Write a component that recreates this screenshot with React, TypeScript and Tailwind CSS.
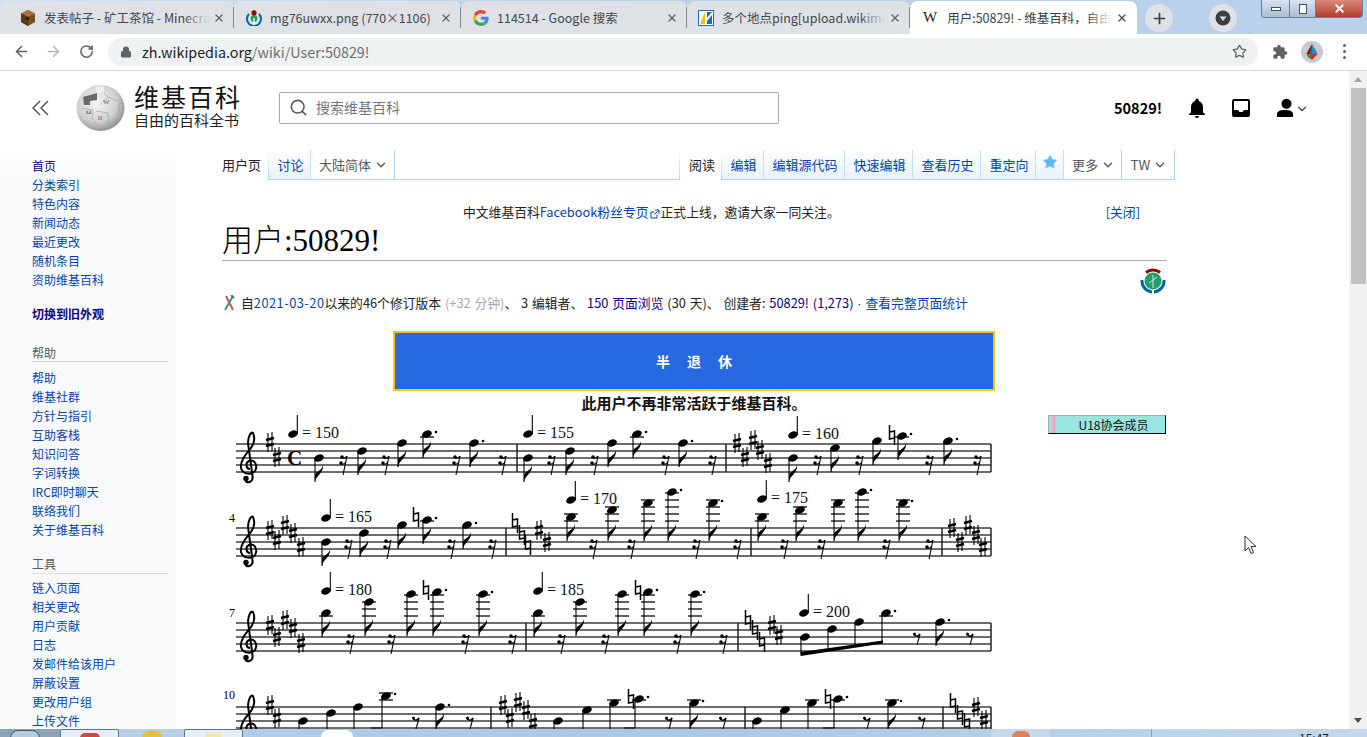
import { ArrowLeft, ArrowRight, ChevronDown, Lock, Plus, RotateCw, Search, Star, X } from "lucide-react";

type Note = { x: number; y: number; dot?: boolean; flag?: boolean; end?: number };
type Acc = [number, number];

const staffX1 = 236;
const staffX2 = 991;

const tabs = [
  { title: "发表帖子 - 矿工茶馆 - Minecraft", w: "w-[234px]", pad: "pl-[20px]", icon: "chest", fade: true },
  { title: "mg76uwxx.png (770×1106)", w: "w-[227px]", pad: "pl-[12px]", icon: "commons", fade: false },
  { title: "114514 - Google 搜索", w: "w-[226px]", pad: "pl-[12px]", icon: "google", fade: false },
  { title: "多个地点ping[upload.wikimedia.org]", w: "w-[223px]", pad: "pl-[11px]", icon: "ping", fade: true },
];

const mainLinks = ["分类索引", "特色内容", "新闻动态", "最近更改", "随机条目", "资助维基百科"];
const helpLinks = ["帮助", "维基社群", "方针与指引", "互助客栈", "知识问答", "字词转换", "IRC即时聊天", "联络我们", "关于维基百科"];
const toolLinks = ["链入页面", "相关更改", "用户贡献", "日志", "发邮件给该用户", "屏蔽设置", "更改用户组", "上传文件"];

const rightTabs = [
  { label: "编辑", w: "w-[42px]" },
  { label: "编辑源代码", w: "w-[81px]" },
  { label: "快速编辑", w: "w-[68px]" },
  { label: "查看历史", w: "w-[68px]" },
  { label: "重定向", w: "w-[55px]" },
];

function FavIcon({ kind }: { kind: string }) {
  if (kind === "chest") {
    return (
      <svg width="16" height="16" viewBox="0 0 16 16" className="shrink-0">
        <path d="M8 0 15 3.500V12L8 16 1 12V3.500Z" fill="#7a4e22" />
        <path d="M8 0 15 3.500 8 7 1 3.500Z" fill="#a8743a" />
        <path d="M8 7V16L1 12V3.500Z" fill="#5b3815" />
        <rect x="6" y="7" width="3" height="3" fill="#2b1a08" />
      </svg>
    );
  }
  if (kind === "commons") {
    return (
      <svg width="16" height="16" viewBox="0 0 16 16" className="shrink-0">
        <path d="M3 4a7 7 0 1 0 10 0" fill="none" stroke="#069" strokeWidth="2" />
        <circle cx="8" cy="8.500" r="3.400" fill="#396" />
        <path d="M8 8V15" stroke="#fff" strokeWidth="1.200" />
        <circle cx="8" cy="2.800" r="2.600" fill="#900" />
      </svg>
    );
  }
  if (kind === "google") {
    return (
      <svg width="16" height="16" viewBox="0 0 48 48" className="shrink-0">
        <path fill="#EA4335" d="M24 9.500c3.500 0 6.700 1.200 9.200 3.600l6.900-6.900C35.900 2.400 30.500 0 24 0 14.600 0 6.500 5.400 2.600 13.200l8 6.200C12.500 13.700 17.800 9.500 24 9.500z" />
        <path fill="#4285F4" d="M47 24.500c0-1.600-.1-3.100-.4-4.500H24v9h13c-.6 3-2.300 5.500-4.800 7.200l7.700 6C44.400 37.900 47 31.800 47 24.500z" />
        <path fill="#FBBC05" d="M10.500 28.600A14.500 14.500 0 0 1 10.500 19.400l-8-6.200A24 24 0 0 0 2.600 34.800z" />
        <path fill="#34A853" d="M24 48c6.500 0 11.900-2.100 15.900-5.800l-7.700-6c-2.100 1.400-4.900 2.300-8.200 2.300-6.200 0-11.500-4.200-13.400-9.900l-8 6.200C6.500 42.600 14.600 48 24 48z" />
      </svg>
    );
  }
  return (
    <svg width="16" height="16" viewBox="0 0 16 16" className="shrink-0">
      <rect x="0.500" y="0.500" width="15" height="15" fill="#fff" stroke="#1a6fb5" />
      <path d="M2 14 7 2V14Z" fill="#f4c20d" />
      <path d="M9 2H14V14H9Z" fill="#1a6fb5" />
      <path d="M9 8 14 2V5L9 11Z" fill="#fff" />
    </svg>
  );
}

function BrowserTab({ title, w, pad, icon, fade }: { title: string; w: string; pad: string; icon: string; fade: boolean }) {
  return (
    <div className={`${w} ${pad} relative flex h-full items-center rounded-t-lg bg-[#dee1e6] pr-[9px]`}>
      <FavIcon kind={icon} />
      <div className="relative ml-[8px] h-[18px] min-w-0 flex-1 overflow-hidden whitespace-nowrap text-[12.500px] leading-[18px] text-[#45484c]">
        {title}
        {fade && <div className="absolute inset-y-0 right-0 w-[26px] bg-gradient-to-l from-[#dee1e6] to-transparent" />}
      </div>
      <X size={12} strokeWidth={2.6} className="ml-[4px] shrink-0 text-[#5f6368]" />
      <div className="absolute right-0 top-[6px] h-[21px] w-px bg-[#80868b]" />
    </div>
  );
}

function TabStrip() {
  return (
    <div className="flex h-[34px] shrink-0 items-stretch bg-gradient-to-r from-[#cfe0f1] via-[#b9d1ea] to-[#b9d1ea] pt-px">
      {tabs.map((t) => (
        <BrowserTab key={t.title} title={t.title} w={t.w} pad={t.pad} icon={t.icon} fade={t.fade} />
      ))}
      <div className="flex w-[227px] items-center rounded-t-lg bg-white pl-[13px] pr-[9px]">
        <span className="font-['Liberation_Serif',serif] text-[15px] text-[#202124]">W</span>
        <div className="relative ml-[10px] h-[18px] min-w-0 flex-1 overflow-hidden whitespace-nowrap text-[12.500px] leading-[18px] text-[#3c4043]">
          用户:50829! - 维基百科，自由的百科全书
          <div className="absolute inset-y-0 right-0 w-[26px] bg-gradient-to-l from-white to-transparent" />
        </div>
        <X size={12} strokeWidth={2.6} className="ml-[4px] shrink-0 text-[#45484c]" />
      </div>
      <div className="ml-[8px] mt-[3px] flex h-[28px] w-[28px] items-center justify-center rounded-full bg-[#dee1e6]">
        <Plus size={17} strokeWidth={2.4} className="text-[#3c4043]" />
      </div>
      <div className="ml-[36px] mt-[3px] flex h-[28px] w-[28px] items-center justify-center rounded-full bg-[#dee1e6]">
        <svg width="16" height="16" viewBox="0 0 16 16">
          <circle cx="8" cy="8" r="7.500" fill="#3c4043" />
          <path d="M4.500 6.500H11.500L8 11Z" fill="#dee1e6" />
        </svg>
      </div>
      <div className="ml-auto mr-[4px] -mt-px flex h-[18px] w-[102px] overflow-hidden rounded-b-[4px] border border-t-0 border-[#6d7f94]">
        <div className="flex w-[27px] items-center justify-center bg-gradient-to-b from-[#d8e4f0] to-[#a9bdd3]">
          <div className="h-[4px] w-[10px] border border-[#44505c] bg-white" />
        </div>
        <div className="flex w-[26px] items-center justify-center border-l border-[#6d7f94] bg-gradient-to-b from-[#d8e4f0] to-[#a9bdd3]">
          <div className="h-[10px] w-[8px] border border-[#44505c] bg-white" />
        </div>
        <div className="flex flex-1 items-center justify-center border-l border-[#6d7f94] bg-gradient-to-b from-[#d98a7c] to-[#b23a2a]">
          <X size={13} strokeWidth={3.4} className="text-white" />
        </div>
      </div>
    </div>
  );
}

function Toolbar() {
  return (
    <div className="flex h-[37px] shrink-0 items-center border-b border-[#d5d6da] bg-white pb-px">
      <ArrowLeft size={17} strokeWidth={2.2} className="ml-[13px] text-[#5f6368]" />
      <ArrowRight size={17} strokeWidth={2.2} className="ml-[15px] text-[#b5b7ba]" />
      <RotateCw size={15} strokeWidth={2.4} className="ml-[17px] text-[#5f6368]" />
      <div className="ml-[14px] flex h-[28px] w-[1150px] items-center rounded-full bg-[#eff2f3] pl-[12px] pr-[10px]">
        <Lock size={12} fill="#5f6368" strokeWidth={2.2} className="text-[#5f6368]" />
        <span className="ml-[10px] text-[14.300px] text-[#202124]">zh.wikipedia.org</span>
        <span className="text-[14.300px] text-[#6b6f73]">/wiki/User:50829!</span>
        <Star size={15} strokeWidth={2} className="ml-auto mr-px text-[#5f6368]" />
      </div>
      <svg width="16" height="16" viewBox="0 0 24 24" className="ml-[14px]" fill="#5f6368">
        <path d="M20.500 11H19V7a2 2 0 0 0-2-2h-4V3.500a2.500 2.500 0 0 0-5 0V5H4a2 2 0 0 0-2 2v3.800h1.500a2.700 2.700 0 0 1 0 5.400H2V20a2 2 0 0 0 2 2h3.800v-1.500a2.700 2.700 0 0 1 5.400 0V22H17a2 2 0 0 0 2-2v-4h1.500a2.500 2.500 0 0 0 0-5z" />
      </svg>
      <svg width="22" height="22" viewBox="0 0 22 22" className="ml-[13px]">
        <circle cx="11" cy="11" r="11" fill="#c9cacc" />
        <path d="M11 3 16.500 13 11 19 5.500 13Z" fill="#d7262b" />
        <path d="M11 3 16.500 13H11Z" fill="#1b8fd6" />
        <path d="M5.500 13H11L8 18Z" fill="#2d9a4b" />
        <path d="M11 3 8 13H5.500Z" fill="#2b2b4a" />
      </svg>
      <div className="ml-[20px] flex flex-col gap-[3px]">
        <div className="h-[3px] w-[3px] rounded-full bg-[#5f6368]" />
        <div className="h-[3px] w-[3px] rounded-full bg-[#5f6368]" />
        <div className="h-[3px] w-[3px] rounded-full bg-[#5f6368]" />
      </div>
    </div>
  );
}

function WikiGlobe() {
  return (
    <svg width="49" height="46" viewBox="0 0 49 46" className="shrink-0">
      <defs>
        <radialGradient id="globe" cx="42%" cy="38%" r="65%">
          <stop offset="0%" stopColor="#f7f7f7" />
          <stop offset="65%" stopColor="#cfcfcf" />
          <stop offset="100%" stopColor="#8e8e8e" />
        </radialGradient>
      </defs>
      <ellipse cx="24.500" cy="23" rx="24" ry="23" fill="url(#globe)" />
      <path d="M7 12 21 8 21 15 14 16 14 20 8 20Z" fill="#6a6a6a" />
      <path d="M19 2 28 1 28 8 21 8Z" fill="#efefef" />
      <path d="M6 23 17 25 16 35M20 26 32 28 33 40M32 12 44 17 42 30M17 36 27 43M28 8 32 12 24 20" fill="none" stroke="#a5a5a5" strokeWidth="0.700" />
      <text x="10" y="29" fontSize="7" fill="#444" fontFamily="Liberation Serif, serif">Ω</text>
      <text x="27" y="19" fontSize="7" fill="#555" fontFamily="Liberation Serif, serif">W</text>
      <text x="22" y="35" fontSize="6" fill="#666" fontFamily="Liberation Serif, serif">И</text>
    </svg>
  );
}

function WikiHeader() {
  return (
    <div className="flex h-[79px] shrink-0 items-center pb-[6px]">
      <svg width="18" height="16" viewBox="0 0 18 16" className="ml-[31px]" fill="none" stroke="#54595d" strokeWidth="1.500">
        <path d="M9 1 2 8 9 15M17 1 10 8 17 15" />
      </svg>
      <div className="ml-[27px]">
        <WikiGlobe />
      </div>
      <div className="-mt-[6px] ml-[9px] flex w-[106px] flex-col">
        <span className="whitespace-nowrap text-[25px] leading-[30px] tracking-[2px] text-[#111]">维基百科</span>
        <span className="whitespace-nowrap text-[15px] leading-[18px] text-[#222]">自由的百科全书</span>
      </div>
      <div className="ml-[39px] flex h-[32px] w-[500px] items-center rounded-[2px] border border-[#a2a9b1] bg-white pl-[9px]">
        <Search size={19} strokeWidth={2} className="text-[#54595d]" />
        <span className="ml-[8px] text-[14px] text-[#72777d]">搜索维基百科</span>
      </div>
      <span className="ml-[335px] text-[14.500px] font-bold text-black">50829!</span>
      <svg width="20" height="20" viewBox="0 0 20 20" className="ml-[25px]">
        <path d="M16 14.500V9c0-3-1.600-5.300-4.300-6V2.200a1.700 1.700 0 0 0-3.400 0V3C5.600 3.700 4 6 4 9v5.500L2 16v1h16v-1zM10 20a2 2 0 0 0 2-2H8a2 2 0 0 0 2 2z" fill="#000" />
      </svg>
      <svg width="20" height="20" viewBox="0 0 20 20" className="ml-[24px]">
        <path d="M3 1h14a2 2 0 0 1 2 2v14a2 2 0 0 1-2 2H3a2 2 0 0 1-2-2V3a2 2 0 0 1 2-2zm0 11v-9h14v9h-4l-1.500 2h-3L7 12z" fill="#000" fillRule="evenodd" />
      </svg>
      <svg width="20" height="20" viewBox="0 0 20 20" className="ml-[24px]">
        <path d="M10 10.500a5 5 0 1 0 0-9.500 5 5 0 0 0 0 9.500zM2 19v-3c0-2.500 3-4 8-4s8 1.500 8 4v3z" fill="#000" />
      </svg>
      <ChevronDown size={14} strokeWidth={2} className="mt-[2px] text-[#444]" />
    </div>
  );
}

function Sidebar() {
  return (
    <div className="flex w-[176px] shrink-0 flex-col bg-gradient-to-b from-white from-0% to-[#f8f9fa] to-[6%] pl-[32px] pr-[8px] pt-[6px] text-[12px] leading-[19px] text-[#0645ad]">
      <a className="h-[19px] text-[#0b0080]">首页</a>
      {mainLinks.map((l) => (
        <a key={l} className="h-[19px]">{l}</a>
      ))}
      <a className="mt-[15px] h-[19px] font-bold text-[#0b0080]">切换到旧外观</a>
      <div className="mt-[20px] h-[19px] border-b border-[#dcdddf] text-[#54595d]">帮助</div>
      <div className="mt-[6px] flex flex-col">
        {helpLinks.map((l) => (
          <a key={l} className="h-[19px]">{l}</a>
        ))}
      </div>
      <div className="mt-[15px] h-[20px] border-b border-[#dcdddf] text-[#54595d]">工具</div>
      <div className="mt-[4px] flex flex-col">
        {toolLinks.map((l) => (
          <a key={l} className="h-[19px]">{l}</a>
        ))}
      </div>
    </div>
  );
}

function TabLink({ w, children, link }: { w: string; children: React.ReactNode; link?: boolean }) {
  return (
    <div
      className={`${w} flex h-full items-center justify-center border-b border-r border-b-[#a7d7f9] border-r-[#bfe0f7] bg-gradient-to-b from-white to-[#e8f2f8] pl-[2px] text-[13px] ${
        link ? "text-[#0645ad]" : "text-[#54595d]"
      }`}
    >
      {children}
    </div>
  );
}

function PageTabs() {
  return (
    <div className="flex h-[30px] w-[953px] shrink-0">
      <div className="flex w-[46px] items-center text-[13px] text-[#222]">用户页</div>
      <div className="w-px border-b border-[#a7d7f9] bg-gradient-to-b from-white to-[#a7d7f9]" />
      <TabLink w="w-[42px]" link>讨论</TabLink>
      <div className="flex w-[84px] items-center justify-center gap-[3px] border-b border-r border-[#a7d7f9] bg-white pl-[2px] text-[13px] text-[#54595d]">
        大陆简体
        <ChevronDown size={14} strokeWidth={2.4} />
      </div>
      <div className="flex-1 border-b border-[#a7d7f9]" />
      <div className="w-px border-b border-[#a7d7f9] bg-gradient-to-b from-white to-[#a7d7f9]" />
      <div className="flex w-[41px] items-center justify-center bg-white pl-[3px] text-[13px] text-[#222]">阅读</div>
      <div className="w-px border-b border-[#a7d7f9] bg-gradient-to-b from-white to-[#a7d7f9]" />
      {rightTabs.map((t) => (
        <TabLink key={t.label} w={t.w} link>{t.label}</TabLink>
      ))}
      <TabLink w="w-[28px]">
        <Star size={16} fill="#5cb8f5" strokeWidth={1} className="-ml-[2px] -mt-[5px] text-[#8fcff7]" />
      </TabLink>
      <div className="flex w-[58px] items-center justify-center gap-[3px] border-b border-r border-[#a7d7f9] bg-white pl-[2px] text-[13px] text-[#54595d]">
        更多
        <ChevronDown size={14} strokeWidth={2.4} />
      </div>
      <div className="flex w-[53px] items-center justify-center gap-[3px] border-b border-r border-[#a7d7f9] bg-white pl-[2px] text-[13.500px] text-[#54595d]">
        TW
        <ChevronDown size={14} strokeWidth={2.4} />
      </div>
    </div>
  );
}

function Sharp({ a }: { a: Acc }) {
  const [x, y] = a;
  return (
    <g>
      <path d={`M${x - 2} ${y - 9}V${y + 10}M${x + 2} ${y - 10}V${y + 9}`} stroke="#000" strokeWidth="1.100" fill="none" />
      <path d={`M${x - 4} ${y - 2}L${x + 4} ${y - 4}M${x - 4} ${y + 4}L${x + 4} ${y + 2}`} stroke="#000" strokeWidth="2.400" fill="none" />
    </g>
  );
}

function Natural({ a }: { a: Acc }) {
  const [x, y] = a;
  return (
    <path
      d={`M${x - 2.500} ${y - 10}V${y + 4}L${x + 2.500} ${y + 3}M${x + 2.500} ${y + 10}V${y - 4}L${x - 2.500} ${y - 3}`}
      stroke="#000"
      strokeWidth="1.500"
      fill="none"
    />
  );
}

function Rest({ x, top, single }: { x: number; top: number; single?: boolean }) {
  if (single) {
    return (
      <g>
        <path d={`M${x + 3} ${top + 11}L${x} ${top + 22}`} stroke="#000" strokeWidth="1.100" />
        <path d={`M${x - 3} ${top + 11}C${x - 2} ${top + 14} ${x + 1} ${top + 14} ${x + 3} ${top + 11}`} stroke="#000" strokeWidth="1.400" fill="none" />
        <circle cx={x - 2.500} cy={top + 11} r="1.500" />
      </g>
    );
  }
  return (
    <g>
      <path d={`M${x + 3} ${top + 12}L${x - 1} ${top + 31}`} stroke="#000" strokeWidth="1.100" />
      <circle cx={x - 2} cy={top + 13} r="1.800" />
      <circle cx={x - 3} cy={top + 19} r="1.800" />
      <path d={`M${x - 2} ${top + 14}Q${x + 1} ${top + 15} ${x + 3} ${top + 12}M${x - 3} ${top + 20}Q${x} ${top + 21} ${x + 2} ${top + 18}`} stroke="#000" strokeWidth="1.200" fill="none" />
    </g>
  );
}

function NoteHead({ n, top }: { n: Note; top: number }) {
  const sx = n.x - 4;
  const end = n.end ?? Math.max(n.y + 24, top + 13);
  const ledgers: number[] = [];
  for (let l = top - 7; l >= n.y - 3; l -= 7) ledgers.push(l);
  return (
    <g>
      {ledgers.map((l) => (
        <line key={l} x1={n.x - 7} x2={n.x + 7} y1={l} y2={l} stroke="#444" strokeWidth="1.700" />
      ))}
      <ellipse cx={n.x} cy={n.y} rx="5" ry="3.500" transform={`rotate(-20 ${n.x} ${n.y})`} />
      <line x1={sx} x2={sx} y1={n.y} y2={end} stroke="#000" strokeWidth="1.100" />
      {n.flag !== false && (
        <path
          d={`M${sx} ${end}C${sx + 1} ${end - 7} ${sx + 9} ${end - 9} ${sx + 8} ${end - 17}C${sx + 7} ${end - 11} ${sx + 1} ${end - 11} ${sx} ${end - 7}Z`}
        />
      )}
      {n.dot && <circle cx={n.x + 9} cy={n.y - 2} r="1.300" />}
    </g>
  );
}

function Clef({ top, x = 249 }: { top: number; x?: number }) {
  const g = top + 21;
  return (
    <g transform={`translate(${x} ${g})`}>
      <path
        d="M1 4C-3 4-4-2 0-4C6-6 9 1 6 6C3 10-6 10-8 3C-9-4-3-11 2-17C5-21 6-27 4-32C2-34-1-28-1-22L3.500 11C4.500 17-2 19-4 15"
        fill="none"
        stroke="#000"
        strokeWidth="2"
      />
      <circle cx="-3" cy="13.500" r="2.700" />
    </g>
  );
}

function Tempo({ x, y, bpm }: { x: number; y: number; bpm: number }) {
  return (
    <g>
      <ellipse cx={x} cy={y} rx="5" ry="3.500" transform={`rotate(-20 ${x} ${y})`} />
      <line x1={x + 4.300} x2={x + 4.300} y1={y - 19} y2={y} stroke="#000" strokeWidth="1.100" />
      <text x={x + 9} y={y + 4} fontSize="16" fontFamily="Liberation Serif, serif" fill="#111">
        = {bpm}
      </text>
    </g>
  );
}

function Staff({ top, bars }: { top: number; bars: number[] }) {
  return (
    <g>
      {[0, 7, 14, 21, 28].map((d) => (
        <line key={d} x1={staffX1} x2={staffX2} y1={top + d} y2={top + d} stroke="#6e6e6e" strokeWidth="1.800" />
      ))}
      {bars.map((b) => (
        <line key={b} x1={b} x2={b} y1={top} y2={top + 28} stroke="#222" strokeWidth="1.500" />
      ))}
      <Clef top={top} />
    </g>
  );
}

function Score() {
  const s1: Note[] = [
    { x: 319, y: 458 }, { x: 362, y: 451 }, { x: 402, y: 443 }, { x: 427, y: 434, dot: true }, { x: 474, y: 443, dot: true },
    { x: 528, y: 458 }, { x: 570, y: 451 }, { x: 612, y: 443 }, { x: 637, y: 434, dot: true }, { x: 683, y: 443, dot: true },
    { x: 793, y: 458 }, { x: 835, y: 448 }, { x: 877, y: 441 }, { x: 902, y: 436, dot: true }, { x: 948, y: 441, dot: true },
  ];
  const s2: Note[] = [
    { x: 326, y: 542 }, { x: 364, y: 533 }, { x: 402, y: 525 }, { x: 427, y: 520, dot: true }, { x: 467, y: 525, dot: true },
    { x: 571, y: 517 }, { x: 612, y: 510 }, { x: 648, y: 503 }, { x: 672, y: 492, dot: true }, { x: 713, y: 503, dot: true },
    { x: 762, y: 517 }, { x: 800, y: 510 }, { x: 838, y: 503 }, { x: 862, y: 492, dot: true }, { x: 903, y: 503, dot: true },
  ];
  const s3: Note[] = [
    { x: 326, y: 613 }, { x: 369, y: 602 }, { x: 411, y: 594 }, { x: 437, y: 592, dot: true }, { x: 483, y: 594, dot: true },
    { x: 538, y: 613 }, { x: 580, y: 602 }, { x: 622, y: 594 }, { x: 648, y: 592, dot: true }, { x: 695, y: 594, dot: true },
    { x: 940, y: 622, dot: true },
  ];
  const s3Beam: Note[] = [
    { x: 805, y: 637, flag: false, end: 654 },
    { x: 832, y: 629, flag: false, end: 650 },
    { x: 859, y: 622, flag: false, end: 647 },
    { x: 886, y: 613, flag: false, dot: true, end: 643 },
  ];
  const s4: Note[] = [
    { x: 303, y: 721, flag: false, end: 729 }, { x: 331, y: 713, flag: false, end: 729 }, { x: 358, y: 707, flag: false, end: 729 }, { x: 386, y: 696, flag: false, dot: true, end: 728 },
    { x: 440, y: 707, dot: true, end: 730 },
    { x: 558, y: 721, flag: false, end: 729 }, { x: 587, y: 710, flag: false, end: 729 }, { x: 614, y: 703, flag: false, end: 729 }, { x: 639, y: 699, flag: false, dot: true, end: 728 },
    { x: 694, y: 703, dot: true, end: 730 },
    { x: 757, y: 721, flag: false, end: 729 }, { x: 785, y: 710, flag: false, end: 729 }, { x: 812, y: 703, flag: false, end: 729 }, { x: 838, y: 699, flag: false, dot: true, end: 728 },
    { x: 892, y: 703, dot: true, end: 730 },
  ];
  const rests: Array<[number, number]> = [
    [344, 444], [386, 444], [457, 444], [503, 444], [552, 444], [595, 444], [666, 444], [713, 444], [818, 444], [860, 444], [930, 444], [978, 444],
    [349, 528], [388, 528], [452, 528], [493, 528], [594, 528], [632, 528], [697, 528], [738, 528], [785, 528], [822, 528], [887, 528], [930, 528],
    [351, 623], [392, 623], [466, 623], [513, 623], [562, 623], [606, 623], [678, 623], [724, 623],
  ];
  const singleRests: Array<[number, number]> = [
    [917, 623], [970, 623], [416, 707], [470, 707], [669, 707], [723, 707], [867, 707], [922, 707],
  ];
  const sharps: Acc[] = [
    [270, 442], [277, 457], [737, 443], [745, 457], [753, 440], [760, 450], [768, 463],
    [270, 530], [277, 540], [285, 525], [293, 533], [301, 547], [539, 530], [547, 542], [952, 528], [960, 542], [968, 525], [976, 535], [983, 547],
    [270, 625], [277, 637], [285, 620], [293, 628], [301, 643], [772, 625], [779, 635],
    [270, 705], [277, 718], [503, 705], [510, 718], [518, 702], [526, 710], [533, 723], [976, 707], [984, 720],
  ];
  const naturals: Acc[] = [
    [892, 435], [416, 517], [515, 523], [522, 535], [528, 545], [426, 590], [638, 590], [748, 620], [755, 630], [762, 642],
    [631, 699], [828, 699], [953, 703], [960, 715], [967, 723],
  ];
  return (
    <svg width="780" height="320" viewBox="222 414 780 320" className="shrink-0">
      <Staff top={444} bars={[517, 726, 991]} />
      <Staff top={528} bars={[506, 751, 942, 991]} />
      <Staff top={623} bars={[526, 738, 991]} />
      <Staff top={707} bars={[491, 745, 943, 991]} />
      <text x="287" y="465" fontSize="21" fontWeight="bold" fontFamily="Liberation Serif, serif">C</text>
      <text x="229" y="522" fontSize="12" fontFamily="Liberation Serif, serif">4</text>
      <text x="229" y="617" fontSize="12" fontFamily="Liberation Serif, serif">7</text>
      <text x="223" y="699" fontSize="12" fontFamily="Liberation Serif, serif">10</text>
      <Tempo x={293} y={434} bpm={150} />
      <Tempo x={528} y={434} bpm={155} />
      <Tempo x={793} y={435} bpm={160} />
      <Tempo x={326} y={518} bpm={165} />
      <Tempo x={571} y={500} bpm={170} />
      <Tempo x={762} y={499} bpm={175} />
      <Tempo x={326} y={591} bpm={180} />
      <Tempo x={538} y={591} bpm={185} />
      <Tempo x={804} y={613} bpm={200} />
      {s1.map((n) => <NoteHead key={n.x} n={n} top={444} />)}
      {s2.map((n) => <NoteHead key={n.x} n={n} top={528} />)}
      {s3.map((n) => <NoteHead key={n.x} n={n} top={623} />)}
      {s3Beam.map((n) => <NoteHead key={n.x} n={n} top={623} />)}
      {s4.map((n) => <NoteHead key={n.x} n={n} top={707} />)}
      <path d="M371 728H382M624 728H635M823 728H834" stroke="#000" strokeWidth="1.200" />
      <path d="M800.500 652 883 640.500V643.500L800.500 656Z" />
      {rests.map(([x, t]) => <Rest key={`${x}-${t}`} x={x} top={t} />)}
      {singleRests.map(([x, t]) => <Rest key={`${x}-${t}`} x={x} top={t} single />)}
      {sharps.map((a) => <Sharp key={`${a[0]}-${a[1]}`} a={a} />)}
      {naturals.map((a) => <Natural key={`${a[0]}-${a[1]}`} a={a} />)}
    </svg>
  );
}

function Article() {
  return (
    <div className="w-[944px] shrink-0 text-[12.800px] text-[#222]">
      <div className="mt-[22px] flex h-[20px] items-center whitespace-nowrap leading-[20px]">
        <span className="ml-[241px]">
          中文维基百科<a className="text-[#0645ad]">Facebook粉丝专页</a>
          <svg width="10" height="10" viewBox="0 0 10 10" className="mx-px inline" fill="none" stroke="#0645ad">
            <path d="M7 5.500V9H1V3H4.500M5 1H9V5M9 1 4.500 5.500" />
          </svg>
          正式上线，邀请大家一同关注。
        </span>
        <a className="ml-auto mr-[26px] text-[#0645ad]">[关闭]</a>
      </div>
      <h1 className="h-[39px] border-b border-[#a2a9b1] font-['Liberation_Serif','Noto_Sans_CJK_SC',serif] text-[31px] font-light leading-[38px] text-black">
        用户:50829!
      </h1>
      <div className="flex h-[32px] justify-end pt-[7px]">
        <svg width="26" height="26" viewBox="0 0 26 26" className="shrink-0">
          <path d="M6 4.500a11 11 0 0 1 14 0" fill="none" stroke="#990000" strokeWidth="3" />
          <path d="M2 12a11 11 0 0 0 10 12M14 24a11 11 0 0 0 10-12" fill="none" stroke="#006699" strokeWidth="3" />
          <circle cx="13" cy="13" r="8.500" fill="#1f9e6e" />
          <path d="M13 7V20M9 15 17 9" stroke="#cfe8da" strokeWidth="1" />
        </svg>
      </div>
      <div className="flex h-[19px] items-center whitespace-nowrap leading-[19px] [word-spacing:1px]">
        <svg width="12" height="16" viewBox="0 0 12 16" className="ml-px mr-[6px] shrink-0" fill="none" strokeWidth="2">
          <path d="M10 1 2 15" stroke="#2fa37c" />
          <path d="M3 1 10 15" stroke="#c05a50" />
          <path d="M8 0 11 3" stroke="#3a78b5" />
        </svg>
        <span>
          自<a className="tracking-[0.5px] text-[#0645ad]">2021-03-20</a>以来的46个修订版本 <span className="text-[#a2a9b1]">(+32 分钟)</span>、 3 编辑者、{" "}
          <a className="text-[#0b0080]">150 页面浏览</a> (30 天)、 创建者: <a className="text-[#0b0080]">50829!</a> <span className="text-[#0b0080]">(1,273)</span>{" "}
          <span className="font-['Liberation_Sans',sans-serif]">·</span> <a className="text-[#0645ad]">查看完整页面统计</a>
        </span>
      </div>
      <div className="ml-[171px] mt-[19px] flex h-[60px] w-[602px] items-center justify-center gap-[17px] border-2 border-[#f2c80c] bg-[#2767e0] text-[14px] font-bold text-white">
        <span>半</span>
        <span>退</span>
        <span>休</span>
      </div>
      <div className="mt-[2px] h-[21px] text-center text-[15px] font-bold leading-[20px] text-[#111]">此用户不再非常活跃于维基百科。</div>
      <div className="flex">
        <Score />
        <div className="ml-auto mt-px flex h-[19px] w-[118px] items-center border border-[#a9a9a9] border-b-black border-r-black bg-[#9ae5e0] text-[12px] text-[#111]">
          <div className="ml-[3px] h-full w-[4px] bg-[#f2a8d0]" />
          <span className="flex-1 pl-[6px] text-center">U18协会成员</span>
        </div>
      </div>
    </div>
  );
}

function Scrollbar() {
  return (
    <div className="relative flex w-[18px] shrink-0 flex-col items-center bg-[#f1f1f1]">
      <div className="mt-[6px] h-0 w-0 border-x-[4px] border-b-[5px] border-x-transparent border-b-[#a3a3a3]" />
      <div className="mt-[6px] h-[196px] w-[15px] bg-[#c1c1c1]" />
      <div className="mb-[6px] mt-auto h-0 w-0 border-x-[4px] border-t-[5px] border-x-transparent border-t-[#505050]" />
    </div>
  );
}

function Taskbar() {
  return (
    <div className="flex h-[8px] shrink-0 bg-gradient-to-r from-[#b5cfe9] via-[#a9c8e6] to-[#c4d7ea]">
      <div className="flex w-[60px] justify-center bg-[#8da3b8] pr-[10px]">
        <div className="mt-[1px] h-[16px] w-[30px] rounded-full border border-[#40566b] bg-[#b7cbdd]" />
      </div>
      <div className="flex w-[59px] justify-center rounded-t-[2px] border-x border-t border-[#5b7590] bg-[#e8eef5]">
        <div className="mt-[3px] h-[5px] w-[20px] rounded-t-full bg-[#d9453a]" />
      </div>
      <div className="flex w-[65px] justify-center bg-[#b7d0e8]">
        <div className="mt-[2px] h-[6px] w-[20px] rounded-t-full bg-[#e8c13c]" />
      </div>
      <div className="flex w-[59px] justify-center rounded-t-[2px] border-x border-t border-[#5b7590] bg-[#e8eef5]">
        <div className="mt-[3px] h-[5px] w-[16px] bg-[#f3e9a8]" />
      </div>
      <div className="ml-[78px] mt-[1px] h-[7px] w-[32px] rounded-t-full bg-white" />
      <div className="ml-auto flex w-[59px] justify-center rounded-tl-[6px] bg-[#c7d9ea]">
        <div className="mt-[2px] h-[6px] w-[18px] rounded-t-full bg-[#e0815a]" />
      </div>
      <div className="ml-[101px] w-px bg-[#8da3b8]" />
      <div className="ml-[147px] mr-[33px] h-[8px] w-[35px] overflow-hidden whitespace-nowrap pt-[2px] text-[12px] leading-[14px] text-[#222]">15:47</div>
    </div>
  );
}

export default function App() {
  return (
    <div className="flex h-[737px] w-[1367px] flex-col overflow-hidden bg-white font-['Noto_Sans_CJK_SC','Noto_Sans',sans-serif]">
      <TabStrip />
      <Toolbar />
      <div className="flex min-h-0 flex-1">
        <div className="flex min-w-0 flex-1 flex-col overflow-hidden">
          <WikiHeader />
          <div className="flex min-h-0 flex-1 overflow-hidden">
            <Sidebar />
            <div className="ml-[46px] flex flex-col">
              <PageTabs />
              <Article />
            </div>
          </div>
        </div>
        <Scrollbar />
      </div>
      <Taskbar />
      <div className="pointer-events-none absolute left-[1244px] top-[535px]">
        <svg width="13" height="20" viewBox="0 0 13 20">
          <path d="M1 1V16L4.500 12.500 7 18.500 9.500 17.500 7 11.500H12Z" fill="#fff" stroke="#2a2f3a" strokeWidth="1" />
        </svg>
      </div>
    </div>
  );
}
